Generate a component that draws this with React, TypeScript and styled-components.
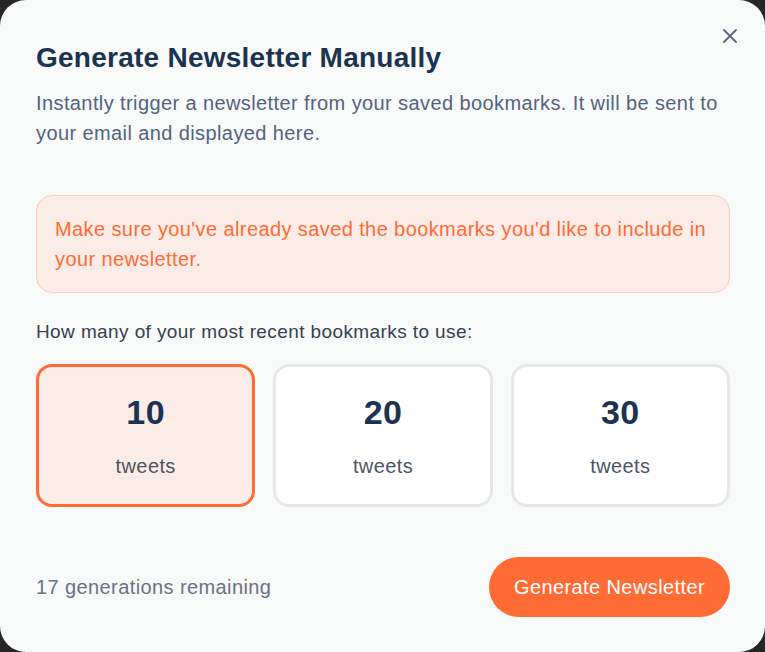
import React, { useState } from "react";
import styled, { createGlobalStyle } from "styled-components";

const Global = createGlobalStyle`
  html, body { margin: 0; padding: 0; background: #262626; }
  body { font-family: "Liberation Sans", Arial, sans-serif; }
  * { box-sizing: border-box; }
`;

const Dialog = styled.div`
  position: relative;
  width: 765px;
  height: 652px;
  background: #f8f9f9;
  border-radius: 26px;
  padding: 40px 35px 0 36px;
  display: flex;
  flex-direction: column;
`;

const Close = styled.button`
  position: absolute;
  top: 26px;
  right: 25px;
  width: 20px;
  height: 20px;
  padding: 0;
  border: none;
  background: transparent;
  display: flex;
  align-items: center;
  justify-content: center;
  cursor: pointer;
`;

const Title = styled.h2`
  margin: 0;
  font-size: 28px;
  line-height: 36px;
  font-weight: 700;
  letter-spacing: 0.25px;
  color: #1b3350;
`;

const Description = styled.p`
  margin: 12px 0 0;
  font-size: 20px;
  line-height: 30px;
  letter-spacing: 0.4px;
  color: #52647f;
`;

const Alert = styled.div`
  margin-top: 47px;
  padding: 18px;
  background: #fbece7;
  border: 1px solid #f8cdbb;
  border-radius: 16px;
  font-size: 20px;
  line-height: 30px;
  letter-spacing: 0.4px;
  color: #ff6b35;
`;

const Label = styled.div`
  margin-top: 28px;
  font-size: 19px;
  line-height: 22px;
  letter-spacing: 0.4px;
  color: #374151;
`;

const Options = styled.div`
  margin-top: 21px;
  display: grid;
  grid-template-columns: repeat(3, 1fr);
  gap: 18px;
`;

const Option = styled.button<{ $active: boolean }>`
  height: 143px;
  border-radius: 16px;
  border: 3px solid ${(p) => (p.$active ? "#ff6b35" : "#e6e7ea")};
  background: ${(p) => (p.$active ? "#fbece7" : "#ffffff")};
  display: flex;
  flex-direction: column;
  align-items: center;
  justify-content: center;
  gap: 25px;
  font-family: inherit;
  cursor: pointer;
  padding: 0;
`;

const Count = styled.span`
  font-size: 34px;
  line-height: 36px;
  font-weight: 700;
  letter-spacing: 0.4px;
  color: #1b3350;
`;

const Unit = styled.span`
  font-size: 20px;
  line-height: 22px;
  letter-spacing: 0.4px;
  color: #4b5563;
`;

const Footer = styled.div`
  margin-top: 50px;
  display: flex;
  align-items: center;
  justify-content: space-between;
`;

const Remaining = styled.span`
  font-size: 20px;
  letter-spacing: 0.4px;
  color: #6b7280;
`;

const Primary = styled.button`
  width: 241px;
  height: 60px;
  border: none;
  border-radius: 30px;
  background: #ff6b35;
  color: #ffffff;
  font-family: inherit;
  font-size: 20px;
  letter-spacing: 0.4px;
  cursor: pointer;
`;

export default function App() {
  const [sel, setSel] = useState(10);
  return (
    <>
      <Global />
      <Dialog>
        <Close aria-label="Close">
          <svg width="16" height="16" viewBox="0 0 16 16" fill="none" stroke="#56677f" strokeWidth="1.8" strokeLinecap="round">
            <path d="M2 2 L14 14 M14 2 L2 14" />
          </svg>
        </Close>
        <Title>Generate Newsletter Manually</Title>
        <Description>
          Instantly trigger a newsletter from your saved bookmarks. It will be sent to your email and displayed here.
        </Description>
        <Alert>
          Make sure you've already saved the bookmarks you'd like to include in your newsletter.
        </Alert>
        <Label>How many of your most recent bookmarks to use:</Label>
        <Options>
          {[10, 20, 30].map((n) => (
            <Option key={n} $active={sel === n} onClick={() => setSel(n)}>
              <Count>{n}</Count>
              <Unit>tweets</Unit>
            </Option>
          ))}
        </Options>
        <Footer>
          <Remaining>17 generations remaining</Remaining>
          <Primary>Generate Newsletter</Primary>
        </Footer>
      </Dialog>
    </>
  );
}
